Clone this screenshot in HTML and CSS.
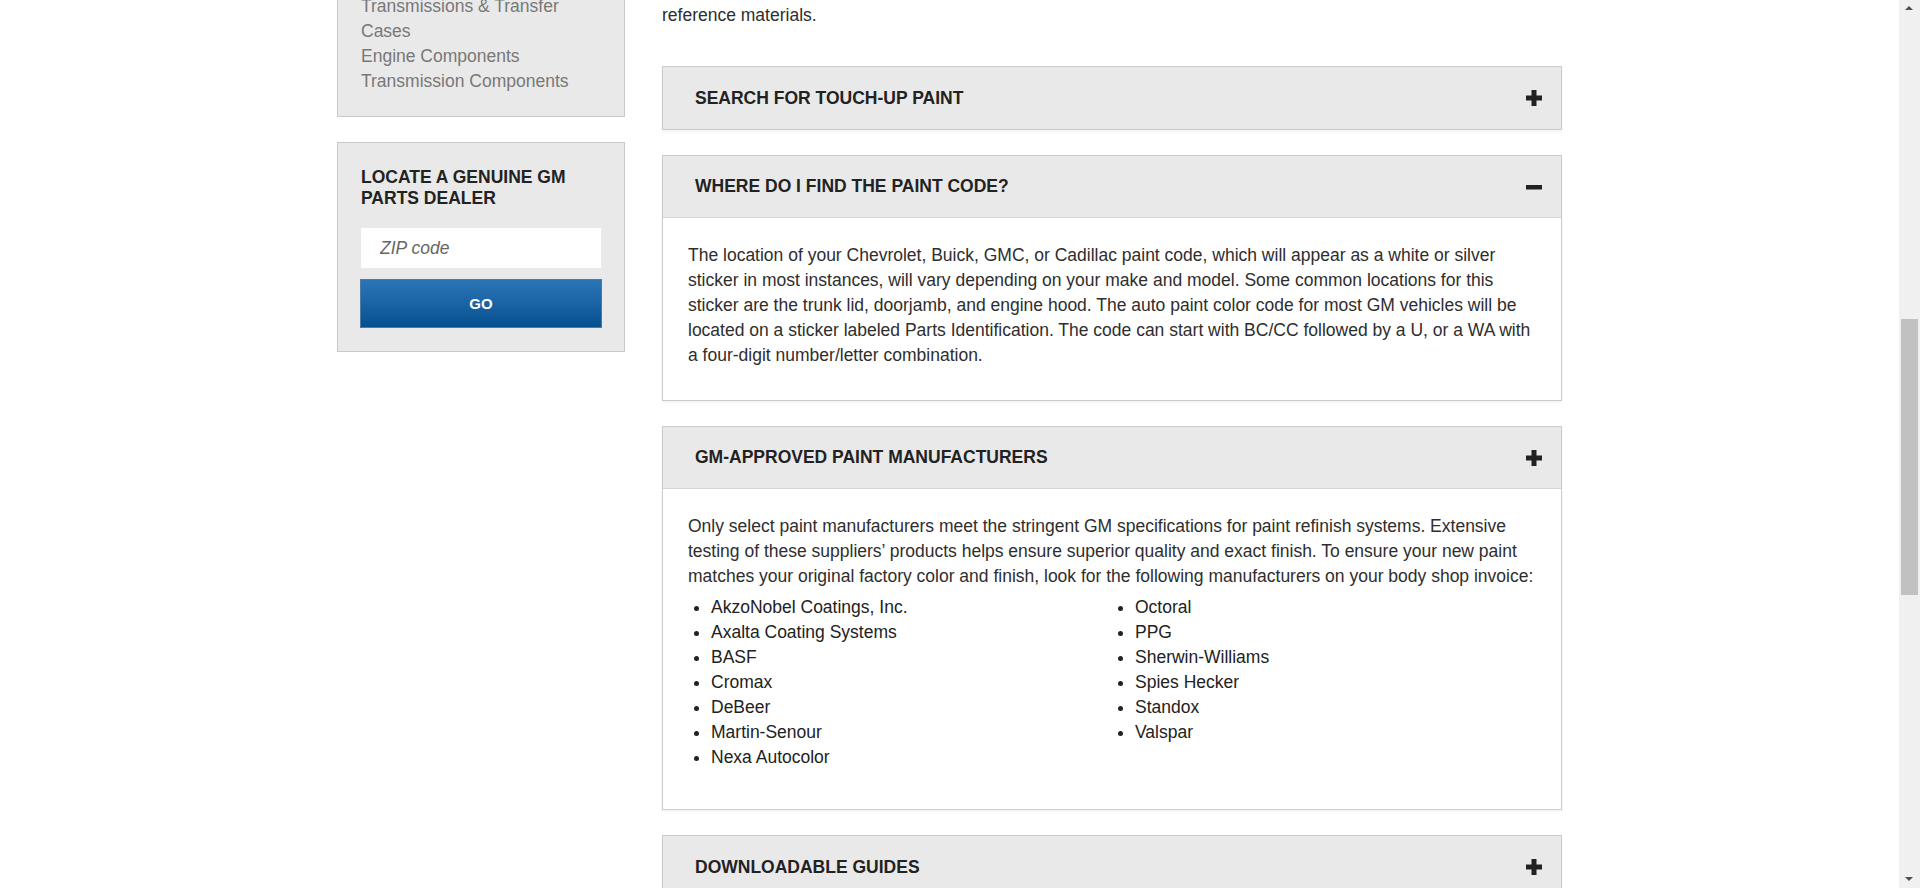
FILE: index.html
```html
<!DOCTYPE html>
<html lang="en">
<head>
<meta charset="utf-8">
<title>GM Genuine Parts – Touch-Up Paint</title>
<link rel="stylesheet" href="styles.css">
</head>
<body>
<div class="page">
  <aside class="sidebar">
    <div class="side-box categories">
      <ul class="cat-list">
        <li><a href="#">Transmissions &amp; Transfer Cases</a></li>
        <li><a href="#">Engine Components</a></li>
        <li><a href="#">Transmission Components</a></li>
      </ul>
    </div>
    <div class="side-box dealer">
      <h3 class="dealer-title">LOCATE A GENUINE GM PARTS DEALER</h3>
      <input class="zip" type="text" placeholder="ZIP code">
      <button class="go" type="button">GO</button>
    </div>
  </aside>

  <main class="content">
    <p class="intro">reference materials.</p>

    <section class="panel">
      <div class="panel-head">
        <h2 class="panel-title">SEARCH FOR TOUCH-UP PAINT</h2>
        <svg class="toggle" viewBox="0 0 16 16" aria-hidden="true"><rect x="5.5" y="0" width="5" height="16"/><rect x="0" y="5.5" width="16" height="5"/></svg>
      </div>
    </section>

    <section class="panel open">
      <div class="panel-head">
        <h2 class="panel-title">WHERE DO I FIND THE PAINT CODE?</h2>
        <svg class="toggle" viewBox="0 0 16 16" aria-hidden="true"><rect x="0" y="6" width="16" height="4.5"/></svg>
      </div>
      <div class="panel-body">
        <p>The location of your Chevrolet, Buick, GMC, or Cadillac paint code, which will appear as a white or silver sticker in most instances, will vary depending on your make and model. Some common locations for this sticker are the trunk lid, doorjamb, and engine hood. The auto paint color code for most GM vehicles will be located on a sticker labeled Parts Identification. The code can start with BC/CC followed by a U, or a WA with a four-digit number/letter combination.</p>
      </div>
    </section>

    <section class="panel open">
      <div class="panel-head">
        <h2 class="panel-title">GM-APPROVED PAINT MANUFACTURERS</h2>
        <svg class="toggle" viewBox="0 0 16 16" aria-hidden="true"><rect x="5.5" y="0" width="5" height="16"/><rect x="0" y="5.5" width="16" height="5"/></svg>
      </div>
      <div class="panel-body">
        <p>Only select paint manufacturers meet the stringent GM specifications for paint refinish systems. Extensive testing of these suppliers’ products helps ensure superior quality and exact finish. To ensure your new paint matches your original factory color and finish, look for the following manufacturers on your body shop invoice:</p>
        <div class="maker-cols">
          <ul class="makers">
            <li>AkzoNobel Coatings, Inc.</li>
            <li>Axalta Coating Systems</li>
            <li>BASF</li>
            <li>Cromax</li>
            <li>DeBeer</li>
            <li>Martin-Senour</li>
            <li>Nexa Autocolor</li>
          </ul>
          <ul class="makers">
            <li>Octoral</li>
            <li>PPG</li>
            <li>Sherwin-Williams</li>
            <li>Spies Hecker</li>
            <li>Standox</li>
            <li>Valspar</li>
          </ul>
        </div>
      </div>
    </section>

    <section class="panel">
      <div class="panel-head">
        <h2 class="panel-title">DOWNLOADABLE GUIDES</h2>
        <svg class="toggle" viewBox="0 0 16 16" aria-hidden="true"><rect x="5.5" y="0" width="5" height="16"/><rect x="0" y="5.5" width="16" height="5"/></svg>
      </div>
    </section>
  </main>
</div>

<div class="scrollbar" aria-hidden="true">
  <span class="sb-arrow sb-up"></span>
  <span class="sb-thumb"></span>
  <span class="sb-arrow sb-down"></span>
</div>
</body>
</html>
```

FILE: styles.css
```css
html {
  overflow: hidden;
}

body {
  margin: 0;
  padding-right: 21px;
  background: #fff;
  color: #2e2e2e;
  font-family: "Liberation Sans", Arial, Helvetica, sans-serif;
  font-size: 17.5px;
  line-height: 25px;
}

.page {
  width: 1225px;
  margin: 0 auto;
  display: grid;
  grid-template-columns: 288px 900px;
  column-gap: 37px;
  align-items: start;
}

/* ---------- sidebar ---------- */
.sidebar {
  display: flex;
  flex-direction: column;
  gap: 25px;
}

.side-box {
  background: #e9e9e9;
  border: 1px solid #c9c9c9;
}

/* the top of this box is scrolled out of view */
.categories {
  margin-top: -40px;
  padding: 33px 23px 22px;
}

.cat-list {
  list-style: none;
  margin: 0;
  padding: 0;
}

.cat-list a {
  color: #787878;
  text-decoration: none;
}

.dealer {
  padding: 24px 23px 23px;
  display: flex;
  flex-direction: column;
}

.dealer-title {
  margin: 0 0 19px;
  font-size: 17.5px;
  line-height: 21px;
  font-weight: bold;
  color: #222;
}

.zip {
  height: 40px;
  box-sizing: border-box;
  border: 0;
  margin: 0;
  padding: 0 19px;
  background: #fff;
  font-family: inherit;
  font-size: 17.5px;
  color: #333;
  outline: none;
}

.zip::placeholder {
  color: #666;
  font-style: italic;
  opacity: 1;
}

.go {
  margin: 11px -1px 0;
  height: 49px;
  border: 1px solid #4e7aa6;
  background: linear-gradient(to bottom, #2b75b6 0%, #1a64a6 50%, #054f8e 100%);
  color: #fff;
  font-family: inherit;
  font-size: 15px;
  font-weight: bold;
  cursor: pointer;
}

/* ---------- main column ---------- */
.content {
  padding-top: 3px;
}

.intro {
  margin: 0 0 38px;
}

.panel {
  border: 1px solid #cbcbcb;
  background: #fff;
  margin-bottom: 25px;
  box-shadow: 0 2px 3px rgba(0, 0, 0, 0.05);
}

.panel-head {
  height: 62px;
  box-sizing: border-box;
  padding: 0 19px 0 32px;
  background: #e9e9e9;
  display: flex;
  align-items: center;
  justify-content: space-between;
}

.panel.open .panel-head {
  border-bottom: 1px solid #d6d6d6;
}

.panel-title {
  margin: 0;
  font-size: 17.5px;
  line-height: 21px;
  font-weight: bold;
  color: #222;
}

.toggle {
  width: 16px;
  height: 16px;
  fill: #222;
  flex: none;
}

.panel-body {
  padding: 25px 25px 26px;
}

.panel-body p {
  margin: 0 0 6px;
}

.maker-cols {
  display: grid;
  grid-template-columns: 1fr 1fr;
  margin-bottom: 13px;
}

.makers {
  margin: 0;
  padding-left: 23px;
  list-style: disc;
  color: #222;
}

/* ---------- browser scrollbar (screenshot chrome) ---------- */
.scrollbar {
  position: fixed;
  top: 0;
  right: 0;
  width: 21px;
  height: 100%;
  background: #f0f0f0;
}

.sb-thumb {
  position: absolute;
  left: 2px;
  right: 2px;
  top: 319px;
  height: 276px;
  background: #c1c1c1;
}

.sb-arrow {
  position: absolute;
  left: 6px;
  width: 0;
  height: 0;
  border-left: 4.5px solid transparent;
  border-right: 4.5px solid transparent;
}

.sb-up {
  top: 6px;
  border-bottom: 4px solid #505050;
}

.sb-down {
  bottom: 7px;
  border-top: 4px solid #505050;
}
```
